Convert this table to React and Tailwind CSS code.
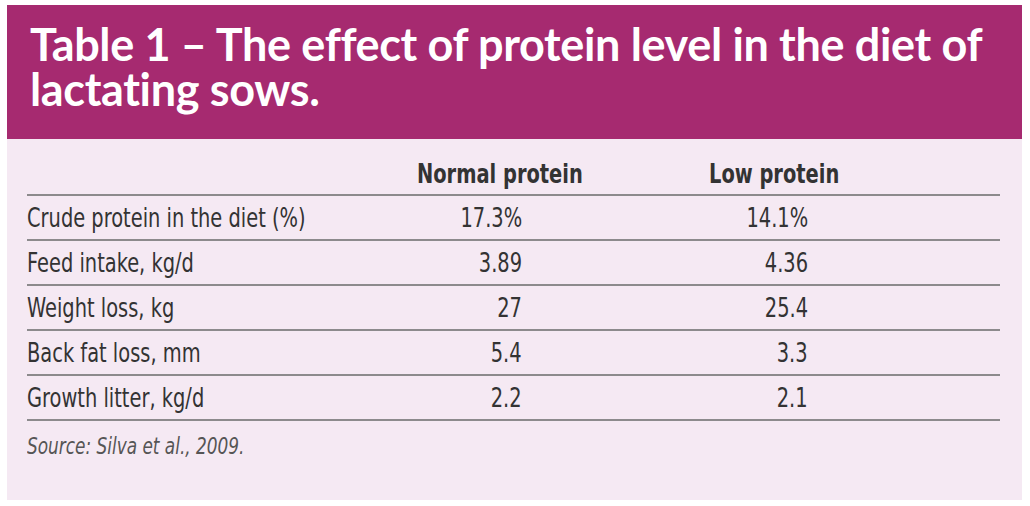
import React from 'react';

// Table 1 – protein level in lactating sow diets
const rows = [
  { label: 'Crude protein in the diet (%)', normal: '17.3%', low: '14.1%' },
  { label: 'Feed intake, kg/d', normal: '3.89', low: '4.36' },
  { label: 'Weight loss, kg', normal: '27', low: '25.4' },
  { label: 'Back fat loss, mm', normal: '5.4', low: '3.3' },
  { label: 'Growth litter, kg/d', normal: '2.2', low: '2.1' },
];

const bodyFont = { fontFamily: '"DejaVu Sans Condensed", "Liberation Sans", sans-serif' };

// condensed text: squeeze horizontally
const Narrow = ({ right, children }) => (
  <span className={`inline-block scale-x-[0.8] whitespace-nowrap ${right ? 'origin-right' : 'origin-left'}`}>
    {children}
  </span>
);

export default function App() {
  return (
    <div className="w-[1030px] h-[506px] bg-white pl-[7px] pt-[5px] pr-[8px] pb-[6px]">
      <div className="h-full flex flex-col bg-[#f5e9f3]">
        <div className="h-[134px] bg-[#a62a70] px-[23px] pt-[17px]">
          <h1
            className="text-white font-bold text-[45px] leading-[45px] tracking-[-0.35px]"
            style={{ fontFamily: 'Lato, "Open Sans", sans-serif' }}
          >
            Table 1 – The effect of protein level in the diet of lactating sows.
          </h1>
        </div>
        <div className="pl-[20px] pr-[22px] text-[#333] text-[27px]" style={bodyFont}>
          <div className="flex items-end h-[57px] pb-[0px] border-b-2 border-[#8c8a8c] font-bold">
            <div className="w-[390px]" />
            <div className="w-[292px]"><Narrow>Normal protein</Narrow></div>
            <div><Narrow>Low protein</Narrow></div>
          </div>
          {rows.map((r) => (
            <div key={r.label} className="flex items-center h-[45px] pt-[2px] border-b-2 border-[#8c8a8c]">
              <div className="w-[400px]"><Narrow>{r.label}</Narrow></div>
              <div className="w-[95px] text-right"><Narrow right>{r.normal}</Narrow></div>
              <div className="w-[286px] text-right"><Narrow right>{r.low}</Narrow></div>
            </div>
          ))}
          <div className="pt-[8px] italic text-[#555] text-[23.5px] font-light">
            <Narrow>Source: Silva et al., 2009.</Narrow>
          </div>
        </div>
      </div>
    </div>
  );
}
